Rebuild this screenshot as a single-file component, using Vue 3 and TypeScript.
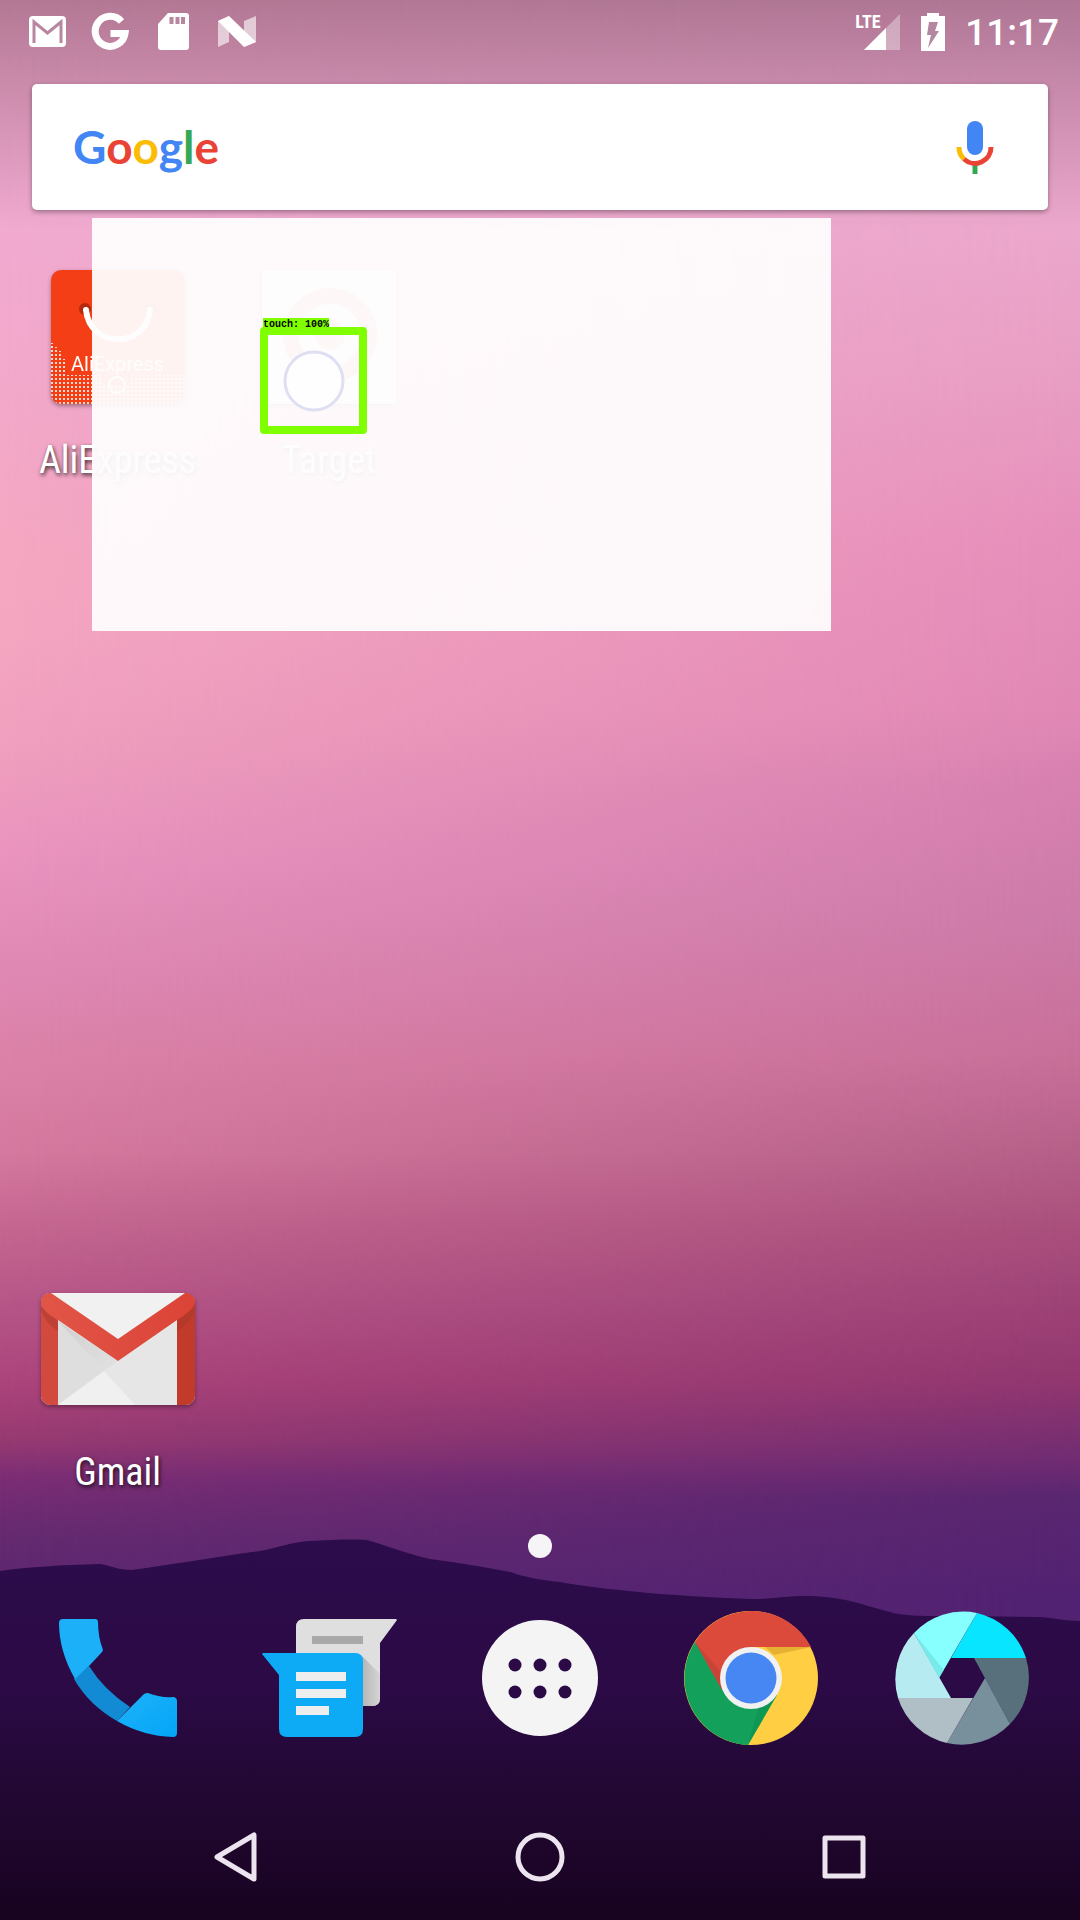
<script setup lang="ts">
import { ref } from 'vue'

const query = ref('')
const clock = '11:17'
const detection = 'touch: 100%'
const wordmark = [
  { letter: 'G', tone: 'blue' },
  { letter: 'o', tone: 'red' },
  { letter: 'o', tone: 'yellow' },
  { letter: 'g', tone: 'blue' },
  { letter: 'l', tone: 'green' },
  { letter: 'e', tone: 'red' },
]
const appDots = [47, 72, 97].flatMap((x) => [59, 86].map((y) => ({ x, y })))
</script>

<template>
  <div class="home">
    <div class="dusk" aria-hidden="true"></div>
    <svg class="hills" viewBox="0 0 1080 384" preserveAspectRatio="none" aria-hidden="true">
      <defs>
        <linearGradient id="hill" x1="0" y1="0" x2="0" y2="1">
          <stop offset="0" stop-color="#2c0c4b" />
          <stop offset="0.4" stop-color="#2b0a45" />
          <stop offset="0.66" stop-color="#220833" />
          <stop offset="1" stop-color="#180320" />
        </linearGradient>
      </defs>
      <path
        fill="url(#hill)"
        d="M0 35C30 31 60 29 100 28C112 30 118 34 132 34C170 29 215 21 260 15C280 11 292 6 310 5C330 4 350 3 367 4C385 9 405 17 430 23C460 27 485 31 510 36C525 41 540 44 560 46C610 55 690 61 750 63C775 63 785 60 805 60C845 60 865 70 890 76C905 81 940 80 965 80L1040 81C1055 82 1065 85 1080 85V384H0Z"
      />
    </svg>

    <header class="status">
      <div class="status-group">
        <svg class="status-icon" viewBox="0 0 48 48" aria-label="New mail">
          <rect x="5" y="8" width="37" height="31" rx="4" fill="#fff" />
          <path d="M10 35V14L23.500 25L37 14V35" fill="none" stroke="#b8869f" stroke-width="3" />
          <path d="M7 9L23.500 20L40 9Z" fill="#fff" />
        </svg>
        <svg class="status-icon" viewBox="0 0 48 48" aria-label="Google">
          <path d="M34.500 13.500A15 15 0 1 0 38 25.500H23.500" fill="none" stroke="#fff" stroke-width="7" />
        </svg>
        <svg class="status-icon" viewBox="0 0 48 48" aria-label="Storage">
          <path d="M18 5H36Q39 5 39 8V39Q39 42 36 42H11Q8 42 8 39V16Z" fill="#fff" />
          <path d="M21.500 9V16M27.500 9V16M33 9V16" stroke="#b8869f" stroke-width="4" />
        </svg>
        <svg class="status-icon" viewBox="0 0 48 48" aria-label="Nougat">
          <path d="M5 13L16 8V34L5 39ZM31 13L43 8V34L31 39Z" fill="#fff" opacity="0.6" />
          <path d="M5 13L16 8L43 34L31 39Z" fill="#fff" />
        </svg>
      </div>
      <div class="status-group status-right">
        <div class="signal">
          <svg viewBox="0 0 46 38" aria-hidden="true">
            <path d="M9 37L45 1V37Z" fill="#fff" opacity="0.35" />
            <path d="M9 37L31 15V37Z" fill="#fff" />
          </svg>
          <span class="network">LTE</span>
        </div>
        <svg class="battery" viewBox="0 0 24 38" aria-label="Charging">
          <path d="M6 0H18V3H24V38H0V3H6Z" fill="#fff" />
          <path d="M8 9H17L14 18H18L7 35L10 22H6Z" fill="#b5869f" />
        </svg>
        <time class="clock">{{ clock }}</time>
      </div>
    </header>

    <form class="search" role="search" @submit.prevent>
      <label class="wordmark" for="query">
        <span v-for="(part, i) in wordmark" :key="i" :class="part.tone">{{ part.letter }}</span>
      </label>
      <input id="query" v-model="query" type="text" autocomplete="off" />
      <button type="button" class="mic" aria-label="Voice search">
        <svg viewBox="0 0 48 60">
          <rect x="16" y="4" width="16" height="34" rx="8" fill="#4285f4" />
          <path d="M24 47V57" stroke="#34a853" stroke-width="5" />
          <path d="M8 30A16 16 0 0 0 13 42" fill="none" stroke="#fbbc05" stroke-width="5" />
          <path d="M13 42A16 16 0 0 0 40 30" fill="none" stroke="#ea4335" stroke-width="5" />
        </svg>
      </button>
    </form>

    <main class="workspace">
      <a class="app ali" href="#aliexpress">
        <svg class="app-icon tile" viewBox="0 0 160 160" aria-hidden="true">
          <defs>
            <pattern id="dots" width="4" height="4" patternUnits="userSpaceOnUse">
              <rect x="1" y="1" width="2" height="2" fill="#fff" />
            </pattern>
            <clipPath id="tile"><rect x="13" y="13" width="134" height="134" rx="10" /></clipPath>
          </defs>
          <g clip-path="url(#tile)">
            <rect x="13" y="13" width="134" height="134" fill="#f43e16" />
            <path d="M13 86L17 86V90H21V94H25V102H29V118H65V128H93V118H147V147H13Z" fill="url(#dots)" opacity="0.8" />
            <circle cx="79" cy="128" r="8" fill="none" stroke="#fff" stroke-width="2" />
          </g>
          <circle cx="47" cy="52" r="6" fill="#b52a0d" />
          <circle cx="113" cy="52" r="6" fill="#b52a0d" />
          <path d="M48 53C52 92 108 92 112 53" fill="none" stroke="#fff" stroke-width="6" stroke-linecap="round" />
          <text x="33" y="114" font-size="20" fill="#fff">AliExpress</text>
        </svg>
        <span class="label">AliExpress</span>
      </a>
      <a class="app target" href="#target">
        <svg class="app-icon tile" viewBox="0 0 160 160" aria-hidden="true">
          <rect x="13" y="13" width="134" height="134" rx="4" fill="#fff" />
          <circle cx="81" cy="78" r="39" fill="none" stroke="#e58f96" stroke-width="16" />
          <circle cx="81" cy="78" r="15" fill="#e58f96" />
        </svg>
        <span class="label">Target</span>
      </a>
      <a class="app gmail" href="#gmail">
        <svg class="app-icon tile" viewBox="0 0 160 160" aria-hidden="true">
          <defs>
            <clipPath id="mail"><rect x="3" y="24" width="154" height="112" rx="9" /></clipPath>
            <linearGradient id="fold" x1="0" y1="0" x2="1" y2="1">
              <stop offset="0" stop-color="#cfcfcf" />
              <stop offset="1" stop-color="#e2e2e2" />
            </linearGradient>
            <linearGradient id="flap" x1="0" y1="0" x2="1" y2="0">
              <stop offset="0" stop-color="#e15547" />
              <stop offset="1" stop-color="#db4437" />
            </linearGradient>
          </defs>
          <g clip-path="url(#mail)">
            <rect x="3" y="24" width="154" height="112" fill="#e6e6e6" />
            <path d="M20 52L66 102L20 136Z" fill="#dedede" />
            <path d="M20 52L80 92L66 102Z" fill="url(#fold)" />
            <path d="M20 136L66 102L97 136Z" fill="#f0f0f0" />
            <path d="M3 24H20V136H3Z" fill="#d24a3d" />
            <path d="M139 24H157V136H139Z" fill="#c23a29" />
            <path d="M3 38L20 52V62Q8 54 3 42ZM157 38L139 52V62Q152 54 157 42Z" fill="#a8382c" opacity="0.5" />
            <path d="M3 24H157V34Q154 42 139 51L80 92L20 51Q7 44 3 36Z" fill="url(#flap)" />
            <path d="M13 24H147L80 70Z" fill="#f1f1f1" />
          </g>
        </svg>
        <span class="label">Gmail</span>
      </a>
    </main>

    <div class="pages"><span class="page-dot"></span></div>

    <nav class="dock" aria-label="Favourites">
      <a href="#phone" aria-label="Phone">
        <svg viewBox="0 0 144 144">
          <defs>
            <linearGradient id="call" x1="0" y1="0" x2="1" y2="1">
              <stop offset="0" stop-color="#1fb2f8" />
              <stop offset="1" stop-color="#03a5f8" />
            </linearGradient>
          </defs>
          <path d="M28 73L43 60Q58 84 84 101L71 115Q43 99 28 73Z" fill="#128bd4" />
          <path d="M17 13H49Q52 13 52 16Q52 31 57 44L56 46L43 60L29 73Q13 45 13 17Q13 13 17 13Z" fill="#1bb0f7" />
          <path d="M71 115L98 88Q100 87 102 87Q114 92 128 91Q131 92 131 95V127Q131 131 127 131Q97 130 71 115Z" fill="url(#call)" />
        </svg>
      </a>
      <a href="#messages" aria-label="Messages">
        <svg viewBox="0 0 144 144">
          <defs>
            <linearGradient id="cast" x1="0" y1="0" x2="1" y2="0">
              <stop offset="0" stop-color="#b5b5b5" />
              <stop offset="1" stop-color="#d5d5d5" />
            </linearGradient>
          </defs>
          <path d="M47 13H139L140 14L123 37V92Q123 100 115 100H39V21Q39 13 47 13Z" fill="#e0dfe0" />
          <path d="M105 50L123 68V92Q123 100 115 100H105Z" fill="url(#cast)" />
          <path d="M55 30H106V38H55Z" fill="#a9a9a9" />
          <path d="M6 47H98Q106 47 106 55V123Q106 131 98 131H30Q22 131 22 123V69L5 48Z" fill="#0dabf6" />
          <path d="M39 66H89V75H39ZM39 83H89V92H39ZM39 100H72V109H39Z" fill="#eeeeef" />
        </svg>
      </a>
      <a href="#apps" aria-label="All apps">
        <svg viewBox="0 0 144 144">
          <circle cx="72" cy="72" r="58" fill="#f4f4f4" />
          <circle v-for="dot in appDots" :key="`${dot.x}-${dot.y}`" :cx="dot.x" :cy="dot.y" r="6.500" fill="#2b0a45" />
        </svg>
      </a>
      <a href="#chrome" aria-label="Chrome">
        <svg viewBox="0 0 144 144">
          <circle cx="72" cy="72" r="67" fill="#ffce43" />
          <path d="M16 36A67 67 0 0 0 69 139L98 89L72 72Z" fill="#13a05b" />
          <path d="M80 100L98 89L69 139Z" fill="#0c8f4c" opacity="0.5" />
          <path d="M16 36A67 67 0 0 1 132 41H72L43 84Z" fill="#dc4a3c" />
          <path d="M16 36L43 84L42 66Z" fill="#b03a30" opacity="0.4" />
          <path d="M86 41H132L95 49Z" fill="#dba52b" opacity="0.7" />
          <circle cx="72" cy="72" r="31" fill="#f1f1f1" />
          <circle cx="72" cy="72" r="25.500" fill="#4687f4" />
        </svg>
      </a>
      <a href="#camera" aria-label="Camera">
        <svg viewBox="0 0 144 144">
          <path d="M61 52L87 7A67 67 0 0 1 136 52Z" fill="#08e6ff" />
          <path d="M84 52H136A67 67 0 0 1 120 118Z" fill="#58707c" />
          <path d="M95 72L120 118A67 67 0 0 1 57 137Z" fill="#78909c" />
          <path d="M83 92L57 137A67 67 0 0 1 8 92Z" fill="#b0bec5" />
          <path d="M61 92H8A67 67 0 0 1 24 27Z" fill="#b6ebf2" />
          <path d="M49 72L24 27A67 67 0 0 1 87 7Z" fill="#88ffff" />
          <path d="M24 27L49 72L54 64Z" fill="#6fdcdc" opacity="0.6" />
        </svg>
      </a>
    </nav>

    <nav class="system" aria-label="System">
      <button type="button" aria-label="Back">
        <svg viewBox="0 0 54 54"><path d="M8 27L45 5V49Z" /></svg>
      </button>
      <button type="button" aria-label="Home">
        <svg viewBox="0 0 54 54"><circle cx="27" cy="27" r="22" /></svg>
      </button>
      <button type="button" aria-label="Recent apps">
        <svg viewBox="0 0 54 54"><rect x="8" y="8" width="38" height="38" /></svg>
      </button>
    </nav>

    <div class="overlay">
      <svg class="touch" viewBox="0 0 64 64" aria-hidden="true">
        <circle cx="32" cy="32" r="29" fill="#fffeff" stroke="#dedff2" stroke-width="3" />
      </svg>
      <div class="box"></div>
      <span class="tag">{{ detection }}</span>
    </div>
  </div>
</template>

<style>
body {
  margin: 0;
}
</style>

<style scoped>
.home {
  position: relative;
  display: flex;
  flex-direction: column;
  min-height: 100vh;
  overflow: hidden;
  font-family: Roboto, "Liberation Sans", sans-serif;
  color: #fff;
  background: linear-gradient(180deg, #f0a8cc 0%, #f1aad1 11%, #f2a8c9 21%, #f5a7c1 29%, #f4a6c1 33%, #f09fbe 39%, #e993bf 45%, #df88b3 51%, #dc82a8 55%, #d6799f 60%, #c46690 64%, #b65688 68%, #ac447b 72%, #973a72 75%, #7b2d74 77%, #652a70 80%, #5a2670 83%);
}

/* The right side of the sky is darker; it fades in from left to right. */
.dusk {
  position: absolute;
  inset: 0;
  background: linear-gradient(180deg, #e9a4cc 0%, #eca8cd 11%, #e89dc2 20%, #e68fbb 28%, #e188b5 37%, #d680b0 41%, #cc7aa8 48%, #c86f99 55%, #b56088 60%, #a94f7c 64%, #a04578 67%, #91366f 72%, #702c72 76%, #592670 78%, #522272 83%);
  mask-image: linear-gradient(90deg, transparent, #000);
}

.home::before {
  content: "";
  position: absolute;
  z-index: 1;
  top: 0;
  left: 0;
  width: 100%;
  height: 230px;
  background: linear-gradient(180deg, rgba(50, 20, 30, 0.32) 0, rgba(50, 20, 30, 0.22) 70px, transparent 100%);
}

.home a,
.home button {
  color: inherit;
  text-decoration: none;
}

.home button {
  padding: 0;
  border: 0;
  background: none;
}

.home svg {
  display: block;
}

.hills {
  position: absolute;
  bottom: 0;
  left: 0;
  width: 100%;
  height: 384px;
}

.status,
.search,
.workspace,
.pages,
.dock,
.system {
  position: relative;
  z-index: 1;
}

.status {
  display: flex;
  align-items: center;
  justify-content: space-between;
  height: 63px;
  padding: 0 21px 0 24px;
}

.status-group {
  display: flex;
  align-items: center;
  gap: 15px;
}

.status-right {
  gap: 20px;
}

.status-icon {
  width: 48px;
  height: 48px;
}

.signal {
  position: relative;
  width: 46px;
  height: 38px;
}

.network {
  position: absolute;
  top: 0;
  left: 0;
  font: 700 18px/18px "Roboto Condensed", "Liberation Sans Narrow", sans-serif;
}

.battery {
  width: 24px;
  height: 38px;
}

.clock {
  padding-top: 2px;
  font-size: 37px;
  line-height: 42px;
  font-weight: 500;
}

.search {
  display: flex;
  align-items: center;
  height: 126px;
  margin: 21px 32px;
  padding: 0 49px 0 41px;
  box-sizing: border-box;
  border-radius: 5px;
  background: #fff;
  box-shadow: 0 2px 5px rgba(0, 0, 0, 0.35);
}

.wordmark {
  font: 700 46px/60px Lato, sans-serif;
}

.blue {
  color: #4285f4;
}

.red {
  color: #ea4335;
}

.yellow {
  color: #fbbc05;
}

.green {
  color: #34a853;
}

.search input {
  flex: 1;
  min-width: 0;
  height: 80px;
  border: 0;
  outline: 0;
  background: none;
  font: 36px Roboto, sans-serif;
}

.mic svg {
  width: 48px;
  height: 60px;
}

.workspace {
  display: grid;
  flex: 1;
  grid-template-columns: repeat(5, 1fr);
  grid-template-rows: repeat(5, minmax(240px, 1fr));
  padding: 0 12px;
}

.app {
  display: flex;
  flex-direction: column;
  align-items: center;
  gap: 20px;
  padding-top: 26px;
}

.gmail {
  grid-row: 5;
  grid-column: 1;
}

.app-icon {
  width: 160px;
  height: 160px;
}

.tile {
  filter: drop-shadow(0 2px 2px rgba(0, 0, 0, 0.35));
}

.label {
  font: 38px/46px "Roboto Condensed", "Liberation Sans Narrow", Roboto, sans-serif;
  text-shadow: 1px 2px 4px rgba(0, 0, 0, 0.8);
}

.pages {
  display: flex;
  align-items: center;
  justify-content: center;
  height: 100px;
}

.page-dot {
  width: 24px;
  height: 24px;
  border-radius: 50%;
  background: #f6f4f7;
}

.dock {
  display: grid;
  grid-template-columns: repeat(5, 1fr);
  justify-items: center;
  padding: 10px 12px 44px;
}

.dock svg {
  width: 144px;
  height: 144px;
}

.system {
  display: flex;
  justify-content: center;
  height: 126px;
}

.system button {
  display: flex;
  flex: 0 1 304px;
  align-items: center;
  justify-content: center;
}

.system svg {
  width: 54px;
  height: 54px;
  fill: none;
  stroke: #ece4ee;
  stroke-width: 5;
  stroke-linejoin: round;
}

.overlay {
  position: absolute;
  z-index: 2;
  top: 218px;
  left: 92px;
  width: 68.4%;
  height: 413px;
  background: rgba(254, 253, 253, 0.95);
}

.touch {
  position: absolute;
  top: 131px;
  left: 190px;
  width: 64px;
  height: 64px;
}

.box {
  position: absolute;
  top: 109px;
  left: 168px;
  width: 107px;
  height: 107px;
  box-sizing: border-box;
  border: 8px solid #80ff00;
  border-radius: 4px;
}

.tag {
  position: absolute;
  top: 100px;
  left: 171px;
  color: #000;
  background: #80ff00;
  font: 700 10px/14px "Liberation Mono", monospace;
}
</style>
